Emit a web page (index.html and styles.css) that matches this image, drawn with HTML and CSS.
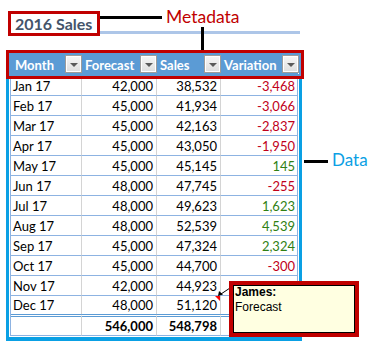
FILE: index.html
```html
<!DOCTYPE html>
<html lang="en">
<head>
<meta charset="utf-8">
<title>2016 Sales</title>
<link rel="stylesheet" href="styles.css">
</head>
<body>
<div class="sheet">
  <div class="title-band">
    <div class="title-box">2016 Sales</div>
    <div class="connector"></div>
    <div class="meta-label">
      <span class="meta-text">Metadata</span>
      <div class="stick"></div>
    </div>
  </div>

  <div class="data-row">
    <div class="frame">
      <div class="grid">
        <div class="row head">
          <div class="hcell first"><span>Month</span><span class="dd"></span></div>
          <div class="hcell"><span>Forecast</span><span class="dd"></span></div>
          <div class="hcell"><span>Sales</span><span class="dd"></span></div>
          <div class="hcell last"><span>Variation</span><span class="dd"></span></div>
        </div>
        <div class="row"><div class="cell txt">Jan 17</div><div class="cell">42,000</div><div class="cell">38,532</div><div class="cell last neg">-3,468</div></div>
        <div class="row"><div class="cell txt">Feb 17</div><div class="cell">45,000</div><div class="cell">41,934</div><div class="cell last neg">-3,066</div></div>
        <div class="row"><div class="cell txt">Mar 17</div><div class="cell">45,000</div><div class="cell">42,163</div><div class="cell last neg">-2,837</div></div>
        <div class="row"><div class="cell txt">Apr 17</div><div class="cell">45,000</div><div class="cell">43,050</div><div class="cell last neg">-1,950</div></div>
        <div class="row"><div class="cell txt">May 17</div><div class="cell">45,000</div><div class="cell">45,145</div><div class="cell last pos">145</div></div>
        <div class="row"><div class="cell txt">Jun 17</div><div class="cell">48,000</div><div class="cell">47,745</div><div class="cell last neg">-255</div></div>
        <div class="row"><div class="cell txt">Jul 17</div><div class="cell">48,000</div><div class="cell">49,623</div><div class="cell last pos">1,623</div></div>
        <div class="row"><div class="cell txt">Aug 17</div><div class="cell">48,000</div><div class="cell">52,539</div><div class="cell last pos">4,539</div></div>
        <div class="row"><div class="cell txt">Sep 17</div><div class="cell">45,000</div><div class="cell">47,324</div><div class="cell last pos">2,324</div></div>
        <div class="row"><div class="cell txt">Oct 17</div><div class="cell">45,000</div><div class="cell">44,700</div><div class="cell last neg">-300</div></div>
        <div class="row"><div class="cell txt">Nov 17</div><div class="cell">42,000</div><div class="cell">44,923</div><div class="cell last pos"></div></div>
        <div class="row dec"><div class="cell txt">Dec 17</div><div class="cell">48,000</div><div class="cell noted">51,120</div><div class="cell last pos"></div></div>
        <div class="row total"><div class="cell txt"></div><div class="cell">546,000</div><div class="cell">548,798</div><div class="cell last"></div></div>
      </div>
      <div class="head-mark"></div>
    </div>
    <div class="data-label">
      <div class="dash"></div>
      <span class="data-text">Data</span>
    </div>
  </div>

  <svg class="arrow" width="18" height="14" viewBox="0 0 18 14">
    <line x1="16" y1="3" x2="7" y2="9" stroke="#000" stroke-width="1"/>
    <polygon points="4,11 5,6 9,9.5" fill="#000"/>
  </svg>
  <div class="comment">
    <div class="c-author">James:</div>
    <div>Forecast</div>
  </div>
</div>
</body>
</html>
```

FILE: styles.css
```css
body {
  margin: 0;
  background: #ffffff;
  font-family: Lato, "Open Sans", sans-serif;
}

.sheet {
  position: relative;
  width: 376px;
  height: 349px;
}

/* ---------- title area ---------- */
.title-band {
  display: flex;
  align-items: flex-start;
  margin-left: 10px;
  width: 290px;
  height: 31px;
  border-bottom: 3px solid #adc6e8;
}

.title-box {
  position: relative;
  z-index: 1;
  box-sizing: border-box;
  margin: 11px 0 0 -2px;
  width: 92px;
  height: 25px;
  padding-left: 4px;
  padding-top: 3px;
  border: 3px solid #c00000;
  background: #ffffff;
  color: #44546a;
  font-weight: 700;
  font-size: 16px;
  line-height: 14px;
  white-space: nowrap;
}

.connector {
  width: 62px;
  height: 3px;
  margin-top: 16px;
  background: #000000;
}

.meta-label {
  display: flex;
  flex-direction: column;
  align-items: center;
  margin: 6px 0 0 4px;
}

.meta-text {
  color: #c00000;
  font-size: 17.5px;
  line-height: 22px;
}

.stick {
  position: relative;
  z-index: 2;
  width: 3px;
  height: 23px;
  margin-top: -1px;
  background: #000000;
}

/* ---------- data table ---------- */
.data-row {
  display: flex;
  align-items: flex-start;
  margin: 16px 0 0 6px;
}

.frame {
  position: relative;
  padding: 1px;
  border: 3px solid #0aa0e4;
  border-bottom-width: 4px;
}

.grid {
  width: 288px;
}

.row {
  display: grid;
  grid-template-columns: 71px 75px 64px 76px;
  border-left: 1px solid #8db3e2;
  border-right: 1px solid #8db3e2;
}

.head {
  height: 22px;
  background: #5b9bd5;
  border-color: #5b9bd5;
}

.hcell {
  display: flex;
  justify-content: space-between;
  align-items: flex-start;
  padding-left: 3px;
  color: #ffffff;
  font-weight: 700;
  font-size: 13px;
  line-height: 23px;
  white-space: nowrap;
}

.hcell.first {
  padding-left: 4px;
}

.hcell.last .dd {
  margin-right: -2px;
}

.dd {
  box-sizing: border-box;
  display: flex;
  align-items: center;
  justify-content: center;
  width: 17px;
  height: 18px;
  margin-top: 1px;
  border: 1px solid #9c9c9c;
  background: linear-gradient(#f6f6f6, #dedede);
  box-shadow: inset 0 0 0 1px #ffffff;
}

.dd::after {
  content: "";
  width: 0;
  height: 0;
  margin-top: 1px;
  border-left: 4px solid transparent;
  border-right: 4px solid transparent;
  border-top: 4px solid #5a5a5a;
}

.cell {
  box-sizing: border-box;
  min-height: 20px;
  padding: 1px 3px 0 2px;
  border-right: 1px solid #d4d4d4;
  border-bottom: 1px solid #8db3e2;
  color: #000000;
  font-size: 13px;
  line-height: 18px;
  text-align: right;
  white-space: nowrap;
}

.cell.txt {
  text-align: left;
}

.cell.last {
  border-right: none;
  padding-right: 2px;
}

.neg {
  color: #c0001a;
}

.pos {
  color: #2f7f14;
}

.dec .cell {
  min-height: 18px;
  border-bottom: none;
  line-height: 17px;
}

.total .cell {
  min-height: 22px;
  padding-top: 0;
  border-top: 3px double #5b9bd5;
  font-weight: 700;
}

.noted {
  position: relative;
}

.noted::after {
  content: "";
  position: absolute;
  top: 0;
  right: 0;
  width: 0;
  height: 0;
  border-top: 5px solid #ff0000;
  border-left: 5px solid transparent;
}

.head-mark {
  position: absolute;
  left: -3px;
  top: -3px;
  box-sizing: border-box;
  width: 298px;
  height: 29px;
  border: 3px solid #c00000;
  box-shadow: inset 0 0 0 2px #5b9bd5;
}

.data-label {
  display: flex;
  align-items: flex-start;
  margin: 100px 0 0 2px;
}

.dash {
  width: 24px;
  height: 3px;
  margin-top: 10px;
  background: #000000;
}

.data-text {
  margin-left: 4px;
  color: #0aa0e4;
  font-size: 17px;
  line-height: 20px;
}

/* ---------- comment ---------- */
.arrow {
  position: absolute;
  left: 214px;
  top: 285px;
}

.comment {
  position: absolute;
  left: 229px;
  top: 281px;
  box-sizing: border-box;
  width: 130px;
  height: 56px;
  padding-left: 2px;
  border: 4px solid #c00000;
  background: #ffffe1;
  box-shadow: inset 0 0 0 1px #000000;
  color: #000000;
  font-family: "Liberation Sans", Arial, sans-serif;
  font-size: 12px;
  line-height: 15px;
}

.c-author {
  font-weight: 700;
}
```
